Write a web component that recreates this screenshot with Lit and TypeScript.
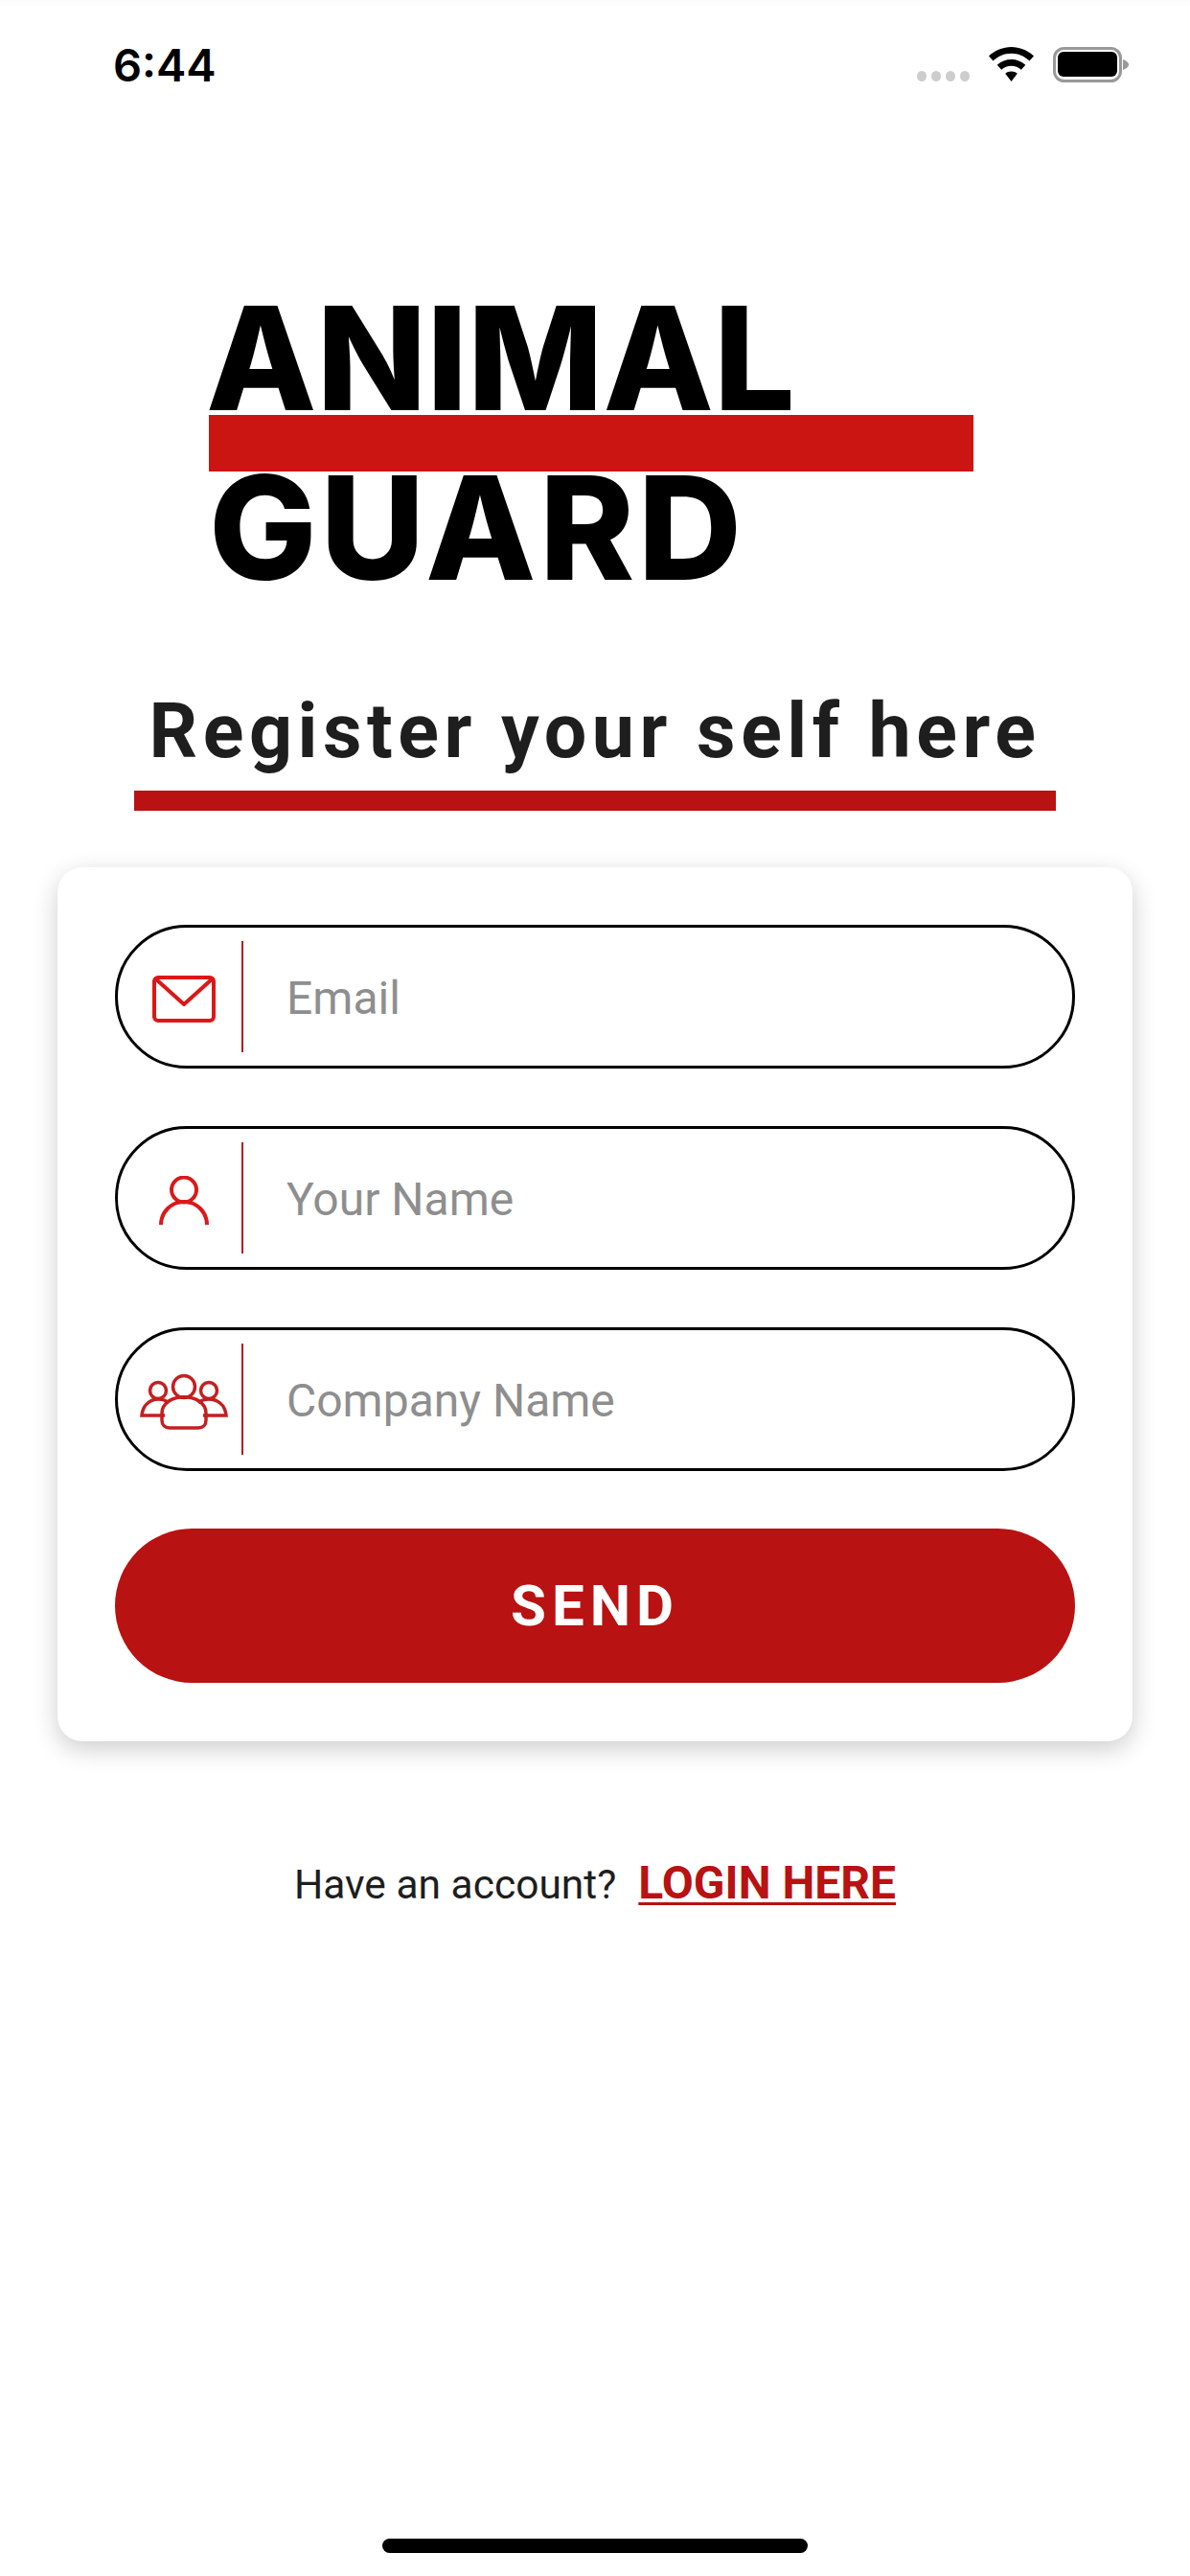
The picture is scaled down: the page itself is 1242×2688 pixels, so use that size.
import { LitElement, html, css, svg } from 'lit';
import { customElement } from 'lit/decorators.js';

const mailIcon = svg`<svg class="icon" width="70" height="53" viewBox="0 0 70 53" fill="none" stroke="#dc1717" stroke-width="4" stroke-linejoin="round">
  <rect x="4" y="4" width="62" height="45" rx="4" />
  <path d="M5 5 L35 32 L65 5" />
</svg>`;

const userIcon = svg`<svg class="icon" width="54" height="51" viewBox="0 0 54 51" fill="none" stroke="#d91a1a" stroke-width="4">
  <circle cx="27" cy="14.5" r="13" />
  <path d="M3 51 A24 24 0 0 1 51 51" />
</svg>`;

const groupIcon = svg`<svg class="icon" width="92" height="60" viewBox="0 0 92 60" fill="none" stroke="#c41f1f" stroke-width="3.5">
  <circle cx="46" cy="14" r="11.5" />
  <circle cx="19" cy="18" r="8.5" />
  <circle cx="72" cy="18" r="8.5" />
  <path d="M23 49 V42 C23 19 69 19 69 42 V49 C69 54 66 57 61 57 H31 C26 57 23 54 23 49 Z" />
  <path d="M26 44 H2 C3 32 12 27 19 27 C23 27 27 28 30 31" />
  <path d="M66 44 H90 C89 32 80 27 72 27 C68 27 64 28 61 31" />
</svg>`;

@customElement('app-root')
export class AppRoot extends LitElement {
  static styles = css`
    :host {
      display: flex;
      flex-direction: column;
      width: 1242px;
      height: 2688px;
      background: #fff;
      font-family: Roboto, 'Liberation Sans', sans-serif;
      color: #1e1e1e;
      overflow: hidden;
    }
    .status {
      display: flex;
      align-items: flex-start;
      height: 100px;
      padding: 44px 64px 0 118px;
      box-sizing: border-box;
      flex: none;
      box-shadow: inset 0 12px 10px -12px rgba(0, 0, 0, 0.05);
    }
    .time {
      font-family: Inter, sans-serif;
      font-weight: 600;
      font-size: 47px;
      line-height: 47px;
      color: #000;
    }
    .status-icons {
      margin-left: auto;
      display: flex;
      align-items: flex-start;
      padding-top: 5px;
    }
    .dots {
      display: flex;
      gap: 5px;
      margin: 25px 20px 0 0;
    }
    .dots i {
      width: 10px;
      height: 11px;
      border-radius: 50%;
      background: #cdcdcd;
    }
    .wifi {
      margin-right: 20px;
    }
    .logo {
      margin: 218px 0 0 218px;
      width: 798px;
      flex: none;
    }
    .logo-word {
      font-family: Inter, sans-serif;
      font-weight: 800;
      font-size: 150px;
      line-height: 111px;
      height: 111px;
      color: #000;
      white-space: nowrap;
      margin-left: -3px;
      letter-spacing: 0;
    }
    .logo-bar {
      height: 59px;
      margin: 4px 0 3px;
      background: #cb1512;
    }
    .logo-word.guard {
      margin-left: 0;
      letter-spacing: 3.5px;
    }
    .title {
      align-self: flex-start;
      margin: 112px 0 0 140px;
      width: 962px;
      box-sizing: border-box;
      padding-bottom: 17px;
      border-bottom: 21px solid #b81212;
      font-weight: 700;
      font-size: 79px;
      line-height: 90px;
      letter-spacing: 5.5px;
      text-align: center;
      white-space: nowrap;
    }
    .card {
      margin: 59px 0 0 60px;
      width: 1122px;
      height: 912px;
      box-sizing: border-box;
      padding: 60px 60px 0;
      border-radius: 26px;
      background: #fff;
      box-shadow: 0 8px 26px rgba(0, 0, 0, 0.2);
      display: flex;
      flex-direction: column;
      gap: 60px;
      flex: none;
    }
    .field {
      display: flex;
      align-items: center;
      height: 150px;
      width: 1002px;
      box-sizing: border-box;
      border: 3px solid #000;
      border-radius: 75px;
    }
    .field-icon {
      display: flex;
      justify-content: center;
      align-items: center;
      width: 131px;
      height: 116px;
      box-sizing: border-box;
      padding-left: 9px;
      border-right: 2px solid #b81212;
      flex: none;
    }
    .icon {
      margin-top: 5px;
      flex: none;
    }
    .field input {
      flex: 1;
      min-width: 0;
      margin: 3px 0 0 45px;
      border: 0;
      outline: 0;
      padding: 0;
      background: transparent;
      font-family: Roboto, sans-serif;
      font-size: 48px;
      color: #333;
    }
    .field input::placeholder {
      color: #8e8e8e;
      opacity: 1;
    }
    .send {
      height: 161px;
      width: 1002px;
      border: 0;
      border-radius: 81px;
      background: #b81212;
      color: #fff;
      font-family: Roboto, sans-serif;
      font-weight: 700;
      font-size: 60px;
      letter-spacing: 6px;
    }
    .footer {
      margin-top: 122px;
      display: flex;
      justify-content: center;
      align-items: baseline;
      gap: 23px;
      font-size: 42.5px;
      line-height: 52px;
      flex: none;
    }
    .footer a {
      color: #b81212;
      font-weight: 700;
      font-size: 48px;
      text-decoration: underline;
      text-decoration-thickness: 3px;
      text-underline-offset: 4px;
    }
    .home {
      margin: auto auto 24px;
      width: 444px;
      height: 15px;
      border-radius: 8px;
      background: #000;
      flex: none;
    }
  `;

  render() {
    return html`
      <div class="status">
        <div class="time">6:44</div>
        <div class="status-icons">
          <div class="dots"><i></i><i></i><i></i><i></i></div>
          <svg class="wifi" width="47" height="36" viewBox="0 0 47 36">
            <path d="M23.5 0 C32 0 40.5 3.5 47 9.5 L42.5 14.5 C37 9.5 30.5 6.8 23.5 6.8 C16.5 6.8 10 9.5 4.5 14.5 L0 9.5 C6.5 3.5 15 0 23.5 0 Z" />
            <path d="M23.5 13 C29 13 34 15 38.3 18.8 L33.8 23.8 C30.8 21.2 27.4 19.8 23.5 19.8 C19.6 19.8 16.2 21.2 13.2 23.8 L8.7 18.8 C13 15 18 13 23.5 13 Z" />
            <path d="M23.5 25.5 C26 25.5 28 26.3 29.8 27.8 L23.5 36 L17.2 27.8 C19 26.3 21 25.5 23.5 25.5 Z" />
          </svg>
          <svg width="79" height="37" viewBox="0 0 79 37">
            <rect x="1.5" y="1.5" width="69" height="34" rx="10" fill="none" stroke="#999" stroke-width="3" />
            <rect x="5" y="5" width="62" height="26" rx="6" fill="#000" />
            <path d="M73 13 C76 14 79 16 79 18.5 C79 21 76 23 73 24 Z" fill="#999" />
          </svg>
        </div>
      </div>

      <div class="logo">
        <div class="logo-word">ANIMAL</div>
        <div class="logo-bar"></div>
        <div class="logo-word guard">GUARD</div>
      </div>

      <div class="title">Register your self here</div>

      <form class="card">
        <label class="field">
          <span class="field-icon">${mailIcon}</span>
          <input placeholder="Email" />
        </label>
        <label class="field">
          <span class="field-icon">${userIcon}</span>
          <input placeholder="Your Name" />
        </label>
        <label class="field">
          <span class="field-icon">${groupIcon}</span>
          <input placeholder="Company Name" />
        </label>
        <button class="send" type="button">SEND</button>
      </form>

      <div class="footer">
        <span>Have an account?</span>
        <a>LOGIN HERE</a>
      </div>

      <div class="home"></div>
    `;
  }
}
